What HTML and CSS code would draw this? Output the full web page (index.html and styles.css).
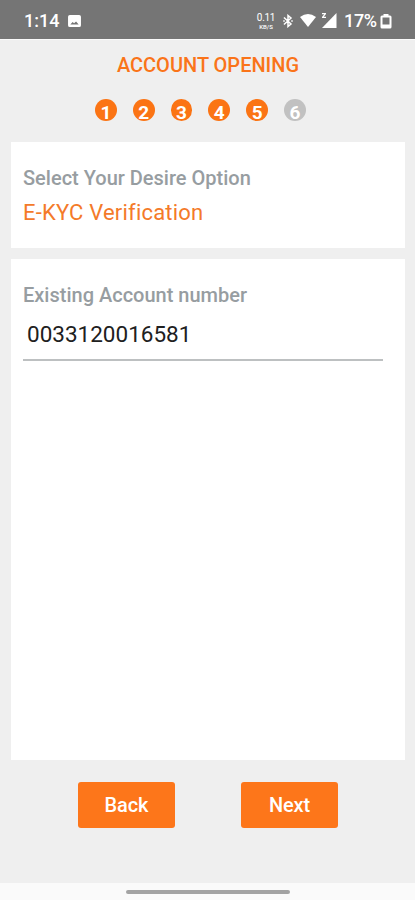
FILE: index.html
```html
<!DOCTYPE html>
<html lang="en">
<head>
<meta charset="utf-8">
<meta name="viewport" content="width=device-width, initial-scale=1">
<title>Account Opening</title>
<link rel="stylesheet" href="styles.css">
</head>
<body>
<div class="screen">
  <div class="status">
    <span class="clock">1:14</span>
    <svg class="photo" viewBox="0 0 14 13"><path fill-rule="evenodd" d="M2 0h10q2 0 2 2v9q0 2-2 2H2q-2 0-2-2V2q0-2 2-2zM2.500 10.300h9L8.700 7 6.500 9 5 7.600z"/></svg>
    <div class="system">
      <span class="speed"><b>0.11</b><small>KB/S</small></span>
      <svg class="bluetooth" viewBox="0 0 10 14"><path d="M1.500 4l6.500 6L5 12.500v-11L8 4l-6.500 6M1 7h0M9 7h0"/></svg>
      <svg class="wifi" viewBox="0 0 16 13"><path d="M0 3Q8-3 16 3L8 13z"/></svg>
      <svg class="signal" viewBox="0 0 16 15"><path d="M15.500 0v15H1z"/><path d="M1 0h4v1L2.800 3.700H5V5H1V4l2.200-2.700H1z"/></svg>
      <span class="percent">17%</span>
      <svg class="battery" viewBox="0 0 12 16"><path fill-rule="evenodd" d="M3.500 1h5v1.500H10q1.500 0 1.500 1.500v10q0 1.500-1.500 1.500H2Q.5 15.500 .5 14V4Q.5 2.500 2 2.500h1.500zM2.500 4.500v7h7v-7z"/></svg>
    </div>
  </div>
  <header>
    <h1>ACCOUNT OPENING</h1>
    <ol class="steps">
      <li>1</li><li>2</li><li>3</li><li>4</li><li>5</li><li class="pending">6</li>
    </ol>
  </header>
  <main>
    <section class="card option">
      <h2>Select Your Desire Option</h2>
      <p>E-KYC Verification</p>
    </section>
    <section class="card account">
      <h2><label for="account">Existing Account number</label></h2>
      <input id="account" value="0033120016581">
    </section>
  </main>
  <div class="actions">
    <button>Back</button>
    <button>Next</button>
  </div>
  <div class="navbar"><i></i></div>
</div>
</body>
</html>
```
FILE: styles.css
```css
* { box-sizing: border-box; }
body { margin: 0; background: #efefef; font-family: Roboto, "Liberation Sans", sans-serif; }
.screen { width: 415px; height: 900px; display: flex; flex-direction: column; overflow: hidden; }
.status { height: 39px; flex: none; background: #757575; color: #fff; display: flex; align-items: center; padding: 2px 23px 0 24px; }
.status svg { fill: #fff; flex: none; display: block; }
.clock { font-size: 18px; font-weight: 500; letter-spacing: 0; width: 44px; }
.photo { width: 13px; height: 12px; }
.system { margin-left: auto; display: flex; align-items: center; }
.speed { width: 18px; display: flex; flex-direction: column; align-items: center; margin-right: 8px; }
.speed b { font-size: 10px; line-height: 11px; font-weight: 400; letter-spacing: -.3px; }
.speed small { font-size: 6px; line-height: 7px; font-weight: 500; }
.status .bluetooth { width: 10px; height: 14px; fill: none; stroke: #fff; stroke-width: 1.5; stroke-linecap: square; margin-right: 7px; }
.wifi { width: 16px; height: 13px; margin-right: 5px; }
.signal { width: 16px; height: 15px; margin-right: 7px; }
.percent { font-size: 18px; font-weight: 500; letter-spacing: -.3px; width: 36px; }
.battery { width: 12px; height: 16px; }
header { height: 103px; flex: none; border-top: 1px solid #fafafa; padding-top: 13px; }
h1 { margin: 0; color: #fa7419; font-size: 20px; line-height: 24px; font-weight: 500; text-align: center; text-indent: 1px; }
.steps { list-style: none; margin: 22px 0 0 95px; padding: 0; display: flex; gap: 16px; }
.steps li { width: 21.800px; height: 22px; border-radius: 50%; background: #fb7414; color: #fff; font-size: 19px; line-height: 27px; font-weight: 700; text-align: center; }
.steps .pending { background: #c1c1c1; }
main { display: flex; flex-direction: column; gap: 11px; padding: 0 10px 0 11px; height: 618px; flex: none; }
.card { background: #fff; padding: 24px 22px 0 12px; }
.option { height: 106px; }
.account { flex: 1; }
h2 { margin: 0; color: #979da1; font-size: 20px; line-height: 24px; font-weight: 500; }
.option p { margin: 10px 0 0; color: #f47a29; font-size: 22px; line-height: 26px; letter-spacing: .2px; }
input { display: block; width: 100%; height: 43px; margin-top: 11px; border: 0; border-bottom: 2px solid #bdc0c1; border-radius: 0; outline: 0; padding: 0 4px 10px; background: none; color: #202020; font: 400 22.500px/30px Roboto, "Liberation Sans", sans-serif; }
.actions { height: 123px; flex: none; display: flex; gap: 66px; padding: 22px 0 0 78px; align-items: flex-start; }
button { width: 97px; height: 46px; border: 0; border-radius: 3px; background: #fd761a; color: #fff; padding: 0; font: 500 20px/24px Roboto, "Liberation Sans", sans-serif; letter-spacing: -.1px; }
.navbar { flex: 1; background: #fafafa; padding: 7px 0 0 126px; }
.navbar i { display: block; width: 164px; height: 4px; border-radius: 2px; background: #a3a3a3; }
```
